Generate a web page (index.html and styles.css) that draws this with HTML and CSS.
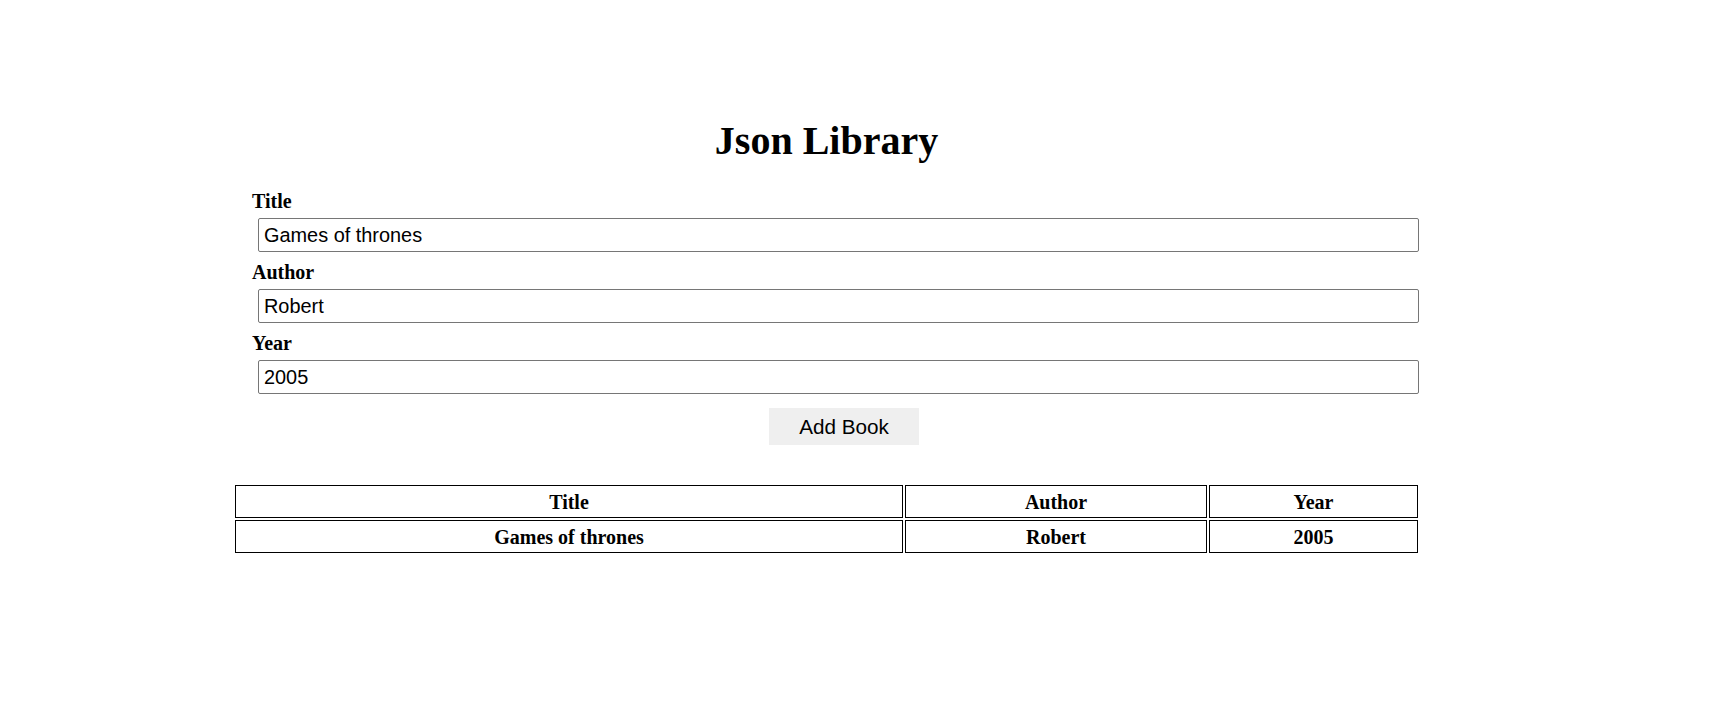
FILE: index.html
```html
<!DOCTYPE html>
<html>
<head>
<meta charset="utf-8">
<title>Json Library</title>
<link rel="stylesheet" href="styles.css">
</head>
<body>
<div class="wrap">
  <h1 class="heading">Json Library</h1>
  <form class="book-form">
    <div class="field">
      <label class="label" for="title">Title</label>
      <input class="input" id="title" type="text" value="Games of thrones">
    </div>
    <div class="field">
      <label class="label" for="author">Author</label>
      <input class="input" id="author" type="text" value="Robert">
    </div>
    <div class="field">
      <label class="label" for="year">Year</label>
      <input class="input" id="year" type="text" value="2005">
    </div>
    <div class="actions">
      <button class="btn" type="button">Add Book</button>
    </div>
  </form>
  <table class="books">
    <colgroup>
      <col class="c-title">
      <col class="c-author">
      <col class="c-year">
    </colgroup>
    <thead>
      <tr><th>Title</th><th>Author</th><th>Year</th></tr>
    </thead>
    <tbody>
      <tr><th>Games of thrones</th><th>Robert</th><th>2005</th></tr>
    </tbody>
  </table>
</div>
</body>
</html>
```

FILE: styles.css
```css
html, body {
  margin: 0;
  padding: 0;
  background: #ffffff;
}
body {
  font-family: "Liberation Serif", "Times New Roman", serif;
  color: #000;
}
.wrap {
  width: 1187px;
  margin-left: 233px;
  padding-top: 118px;
}
.heading {
  margin: 0;
  font-size: 40px;
  line-height: 46px;
  font-weight: bold;
  text-align: center;
}
.book-form {
  margin-top: 24px;
}
.field {
  display: flex;
  flex-direction: column;
  align-items: flex-start;
  padding-bottom: 7px;
}
.label {
  display: block;
  margin-left: 19px;
  font-size: 20px;
  line-height: 24px;
  padding-top: 1px;
  font-weight: bold;
  margin-bottom: 5px;
}
.input {
  box-sizing: border-box;
  width: 1161px;
  height: 34px;
  margin: 0 0 0 25px;
  padding: 0 5px;
  border: 1px solid #767676;
  border-radius: 2px;
  font-family: "Liberation Sans", Arial, sans-serif;
  font-size: 19.9px;
  color: #000;
  background: #fff;
}
.actions {
  display: flex;
  padding-top: 7px;
  padding-left: 536px;
}
.btn {
  box-sizing: border-box;
  width: 150px;
  height: 37px;
  border: none;
  background: #efefef;
  font-family: "Liberation Sans", Arial, sans-serif;
  font-size: 20.7px;
  color: #000;
  padding: 0;
}
.books {
  margin-top: 38px;
  width: 1187px;
  border-collapse: separate;
  border-spacing: 2px;
  table-layout: fixed;
}
.c-title { width: 668px; }
.c-author { width: 302px; }
.c-year { width: 209px; }
.books th {
  box-sizing: border-box;
  border: 1px solid #000;
  padding: 2px 0 0;
  height: 33px;
  line-height: 29px;
  font-size: 20px;
  font-weight: bold;
  text-align: center;
}
```
